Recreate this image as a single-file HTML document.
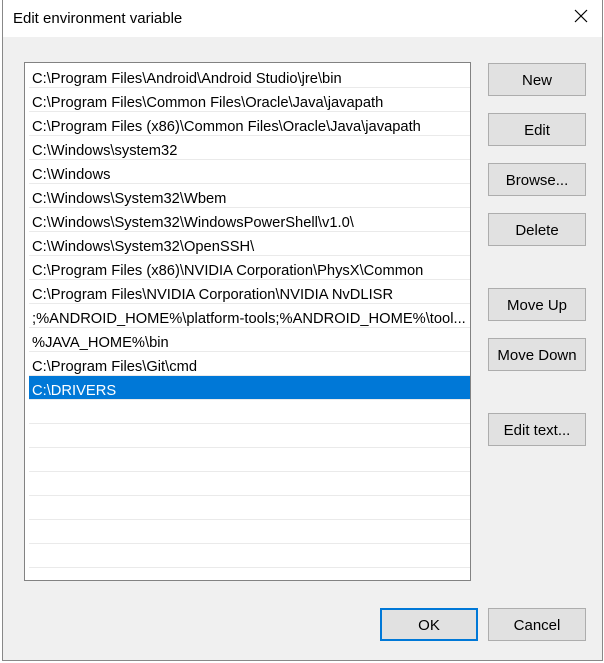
<!DOCTYPE html>
<html><head><style>
body{margin:0;width:604px;height:663px;background:#fff;position:relative;overflow:hidden;font-family:"Liberation Sans",sans-serif;}
#win{position:absolute;left:2px;top:0;width:599px;height:660px;border-left:1px solid #888;border-right:1px solid #888;border-bottom:1px solid #888;background:#f0f0f0;}
#title{position:absolute;left:0;top:0;width:599px;height:37px;background:#fff;}
#title span{position:absolute;left:10px;top:10px;font-size:15px;color:#000;}
#x{position:absolute;left:571px;top:9px;}
#list{position:absolute;left:21px;top:62px;width:445px;height:517px;border:1px solid #828282;background:#fff;}
.r{position:absolute;left:4px;width:441px;height:23px;border-bottom:1px solid #eaeaea;font-size:15px;line-height:23px;color:#000;white-space:nowrap;overflow:hidden;}
.r span{display:inline-block;position:relative;top:3px;left:3px;transform:scaleX(0.98);transform-origin:0 50%;}
.sel{background:#0078d7;color:#fff;}
.b{position:absolute;width:96px;height:31px;border:1px solid #adadad;background:#e1e1e1;font-size:15px;line-height:33px;text-align:center;color:#000;}
.ok{border:2px solid #0078d7;width:94px;height:29px;line-height:31px;}
</style></head><body>
<div id="win">
<div id="title"><span>Edit environment variable</span>
<svg id="x" width="14" height="14" viewBox="0 0 14 14"><path d="M1 1L13 13M13 1L1 13" stroke="#000" stroke-width="1.2"/></svg></div>
<div id="list">
<div class="r" style="top:1px"><span>C:\Program Files\Android\Android Studio\jre\bin</span></div>
<div class="r" style="top:25px"><span>C:\Program Files\Common Files\Oracle\Java\javapath</span></div>
<div class="r" style="top:49px"><span>C:\Program Files (x86)\Common Files\Oracle\Java\javapath</span></div>
<div class="r" style="top:73px"><span>C:\Windows\system32</span></div>
<div class="r" style="top:97px"><span>C:\Windows</span></div>
<div class="r" style="top:121px"><span>C:\Windows\System32\Wbem</span></div>
<div class="r" style="top:145px"><span>C:\Windows\System32\WindowsPowerShell\v1.0\</span></div>
<div class="r" style="top:169px"><span>C:\Windows\System32\OpenSSH\</span></div>
<div class="r" style="top:193px"><span>C:\Program Files (x86)\NVIDIA Corporation\PhysX\Common</span></div>
<div class="r" style="top:217px"><span>C:\Program Files\NVIDIA Corporation\NVIDIA NvDLISR</span></div>
<div class="r" style="top:241px"><span>;%ANDROID_HOME%\platform-tools;%ANDROID_HOME%\tool...</span></div>
<div class="r" style="top:265px"><span>%JAVA_HOME%\bin</span></div>
<div class="r" style="top:289px"><span>C:\Program Files\Git\cmd</span></div>
<div class="r sel" style="top:313px"><span>C:\DRIVERS</span></div>
<div class="r" style="top:337px"></div><div class="r" style="top:361px"></div><div class="r" style="top:385px"></div>
<div class="r" style="top:409px"></div><div class="r" style="top:433px"></div><div class="r" style="top:457px"></div>
<div class="r" style="top:481px"></div>
</div>
<div class="b" style="left:485px;top:63px">New</div>
<div class="b" style="left:485px;top:113px">Edit</div>
<div class="b" style="left:485px;top:163px">Browse...</div>
<div class="b" style="left:485px;top:213px">Delete</div>
<div class="b" style="left:485px;top:288px">Move Up</div>
<div class="b" style="left:485px;top:338px">Move Down</div>
<div class="b" style="left:485px;top:413px">Edit text...</div>
<div class="b ok" style="left:377px;top:608px">OK</div>
<div class="b" style="left:485px;top:608px">Cancel</div>
</div>
</body></html>
